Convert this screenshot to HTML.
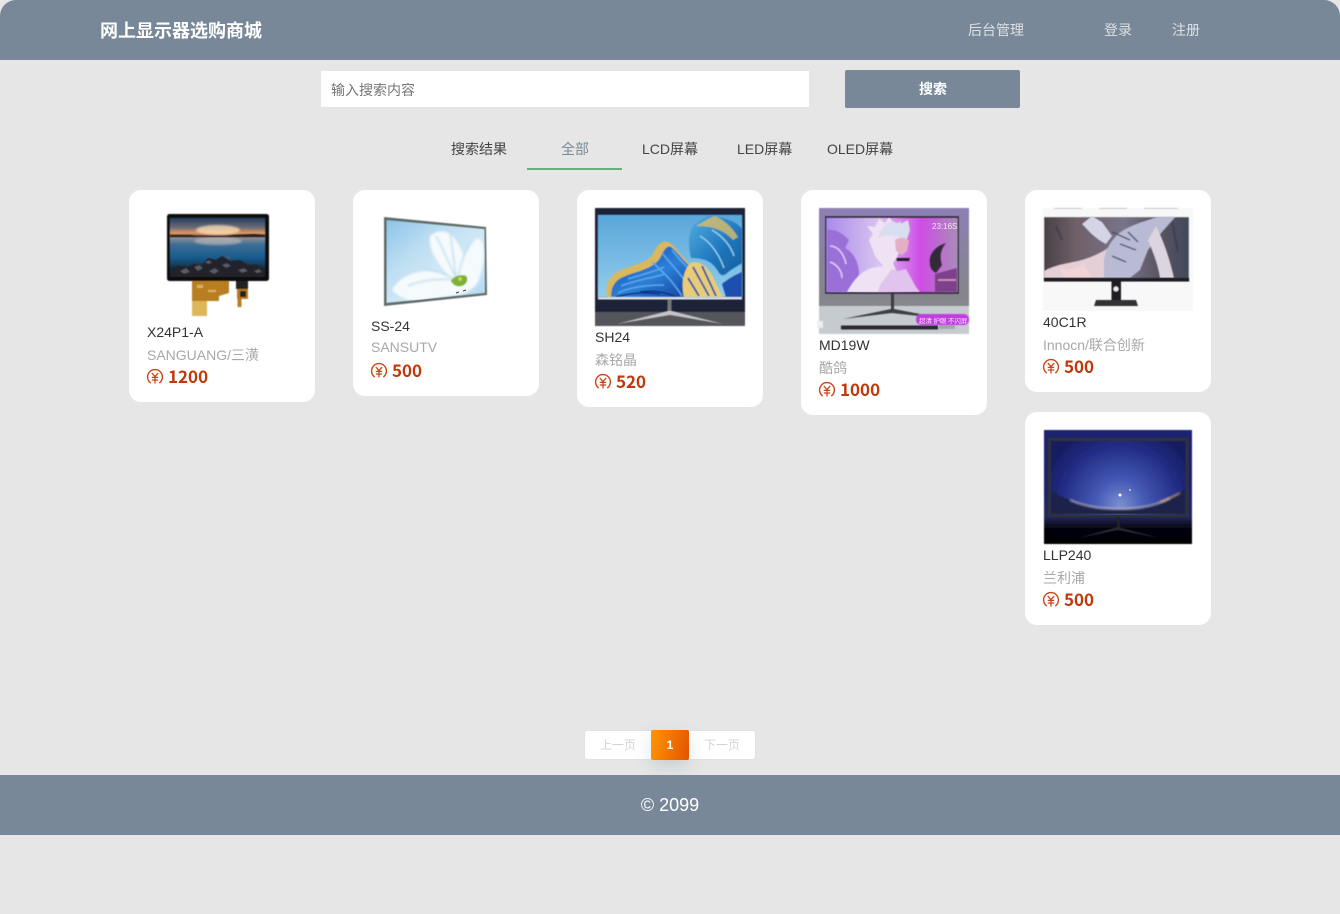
<!DOCTYPE html>
<html lang="zh-CN">
<head>
<meta charset="utf-8">
<title>网上显示器选购商城</title>
<style>
*{margin:0;padding:0;box-sizing:border-box}
html,body{width:1340px;height:914px;overflow:hidden;background:#e6e6e6}
body{position:relative;font-family:"Liberation Sans","Noto Sans CJK SC",sans-serif;font-size:14px;color:#333}
.a{position:absolute;white-space:nowrap}
.t{position:absolute;white-space:nowrap;line-height:20px;height:20px}
.hdr{left:0;top:0;width:1340px;height:60px;background:#788898;border-radius:16px 16px 0 0}
.nav{color:#dde1e5}
.card{position:absolute;background:#fff;border-radius:12px;width:186px}
.n{color:#333}
.b{color:#a8a8a8}
.p{color:#c0390b;font-weight:700;font-size:17px;font-family:"Noto Sans CJK SC",sans-serif}
.tab{color:#444}
</style>
</head>
<body>
<div class="a hdr"></div>
<div class="t" style="left:100px;top:21px;font-size:18px;font-weight:700;color:#fff">网上显示器选购商城</div>
<div class="t nav" style="left:968px;top:20px">后台管理</div>
<div class="t nav" style="left:1104px;top:20px">登录</div>
<div class="t nav" style="left:1172px;top:20px">注册</div>

<div class="a" style="left:321px;top:71px;width:488px;height:36px;background:#fff"></div>
<div class="t" style="left:331px;top:80px;color:#757575">输入搜索内容</div>
<div class="a" style="left:845px;top:70px;width:175px;height:38px;background:#788898;border-radius:2px"></div>
<div class="t" style="left:919px;top:79px;color:#fff;font-weight:700">搜索</div>

<div class="t tab" style="left:451px;top:139px">搜索结果</div>
<div class="t" style="left:561px;top:139px;color:#788898">全部</div>
<div class="t tab" style="left:642px;top:139px">LCD屏幕</div>
<div class="t tab" style="left:737px;top:139px">LED屏幕</div>
<div class="t tab" style="left:827px;top:139px">OLED屏幕</div>
<div class="a" style="left:527px;top:168px;width:95px;height:2px;background:#6bb07c"></div>

<div class="card" style="left:129px;top:190px;height:212px"></div>
<div class="card" style="left:353px;top:190px;height:206px"></div>
<div class="card" style="left:577px;top:190px;height:217px"></div>
<div class="card" style="left:801px;top:190px;height:225px"></div>
<div class="card" style="left:1025px;top:190px;height:202px"></div>
<div class="card" style="left:1025px;top:412px;height:213px"></div>

<svg class="a" style="left:0;top:0" width="1340" height="914" viewBox="0 0 1340 914">
<defs>
<filter id="s" x="-5%" y="-5%" width="110%" height="110%"><feGaussianBlur stdDeviation="0.45"/></filter>
<filter id="s1" x="-20%" y="-20%" width="140%" height="140%"><feGaussianBlur stdDeviation="1"/></filter>
<filter id="s2" x="-30%" y="-30%" width="160%" height="160%"><feGaussianBlur stdDeviation="2.5"/></filter>
<clipPath id="c1"><rect x="170" y="218" width="95" height="59"/></clipPath>
<clipPath id="c2"><path d="M386.500 220 484.500 229 485 293 386.500 303z"/></clipPath>
<clipPath id="c3"><rect x="598" y="215" width="144" height="82"/></clipPath>
<clipPath id="c4"><rect x="826.500" y="218" width="131" height="74"/></clipPath>
<clipPath id="c5"><rect x="1044" y="217" width="145" height="61"/></clipPath>
<clipPath id="c6"><rect x="1051" y="441" width="134.500" height="73"/></clipPath>
<linearGradient id="g1" x1="0" y1="0" x2="0" y2="1">
<stop offset="0" stop-color="#22405e"/><stop offset=".16" stop-color="#6c6a78"/><stop offset=".26" stop-color="#e49a62"/><stop offset=".3" stop-color="#70493a"/><stop offset=".34" stop-color="#8a8d98"/><stop offset=".45" stop-color="#3d6e96"/><stop offset=".68" stop-color="#175a8c"/><stop offset=".85" stop-color="#112c42"/><stop offset="1" stop-color="#15171b"/>
</linearGradient>
<linearGradient id="g2" x1="0" y1="0" x2="1" y2="1">
<stop offset="0" stop-color="#8cc4ea"/><stop offset=".35" stop-color="#bfdff2"/><stop offset=".7" stop-color="#d9edf8"/><stop offset="1" stop-color="#a9d2ec"/>
</linearGradient>
<linearGradient id="g3" x1="0" y1="0" x2="0" y2="1">
<stop offset="0" stop-color="#5aa6da"/><stop offset="1" stop-color="#93cdec"/>
</linearGradient>
<linearGradient id="wb" x1="0" y1="0" x2="1" y2="1">
<stop offset="0" stop-color="#1448b0"/><stop offset=".55" stop-color="#2c80d8"/><stop offset="1" stop-color="#123c98"/>
</linearGradient>
<linearGradient id="wc" x1="0" y1="0" x2="1" y2="1">
<stop offset="0" stop-color="#50b0e0"/><stop offset=".6" stop-color="#1f74bc"/><stop offset="1" stop-color="#15609c"/>
</linearGradient>
<linearGradient id="g4" x1="0" y1="0" x2="1" y2="0">
<stop offset="0" stop-color="#a98cec"/><stop offset=".4" stop-color="#d9c4f0"/><stop offset=".72" stop-color="#d04ce6"/><stop offset="1" stop-color="#a98cb8"/>
</linearGradient>
<linearGradient id="g4b" x1="0" y1="0" x2="0" y2="1">
<stop offset="0" stop-color="#8e80b4"/><stop offset=".7" stop-color="#85858c"/><stop offset="1" stop-color="#8a8a90"/>
</linearGradient>
<radialGradient id="g6" gradientUnits="userSpaceOnUse" cx="1120" cy="505" r="85">
<stop offset="0" stop-color="#7c8ed0"/><stop offset=".3" stop-color="#4458b4"/><stop offset=".7" stop-color="#222c84"/><stop offset="1" stop-color="#141a5c"/>
</radialGradient>
<linearGradient id="g6b" x1="0" y1="0" x2="0" y2="1">
<stop offset="0" stop-color="#1b2270"/><stop offset=".55" stop-color="#1c2468"/><stop offset=".76" stop-color="#24285a"/><stop offset=".86" stop-color="#060612"/><stop offset="1" stop-color="#000"/>
</linearGradient>
<linearGradient id="g5" x1="0" y1="0" x2="1" y2="0">
<stop offset="0" stop-color="#4a4048"/><stop offset=".22" stop-color="#6f6068"/><stop offset=".55" stop-color="#77748a"/><stop offset=".8" stop-color="#5a5360"/><stop offset="1" stop-color="#404a5c"/>
</linearGradient>
<g id="yen">
<path d="M3.700 14A7.400 7.400 0 1 1 12.300 14" fill="none" stroke="#c8451a" stroke-width="1.400"/>
<path d="M4.800 4 8 7.600 11.200 4M8 7.600V14.500M4.800 8.400h6.400M4.800 11h6.400" fill="none" stroke="#c8451a" stroke-width="1.300"/>
</g>
</defs>

<!-- image 1 -->
<g filter="url(#s)">
<path d="M192 281h37v12l-10 3v5h-12v15h-15z" fill="#b87e24"/>
<rect x="192" y="301" width="15" height="15" fill="#dcb658"/>
<path d="M197 285h6v3h-6zM208 290h8v2h-8z" fill="#e0b060"/>
<rect x="236" y="281" width="12" height="8" fill="#222"/>
<rect x="237" y="289" width="11" height="10" fill="#b87a24"/>
<rect x="240" y="291" width="6" height="6" fill="#222"/>
<rect x="237.500" y="299" width="4" height="8" fill="#b87a24"/>
<rect x="167" y="214" width="102" height="67" rx="2.500" fill="#0c0c0e"/>
<rect x="170" y="218" width="95" height="59" fill="url(#g1)"/>
</g>
<g clip-path="url(#c1)">
<ellipse cx="218" cy="230" rx="22" ry="5" fill="#ffe2b8" opacity=".75" filter="url(#s1)"/>
<ellipse cx="218" cy="241" rx="24" ry="4" fill="#c8c0bc" opacity=".6" filter="url(#s1)"/>
<path d="M170 235h20l6 1h30l8-1 20-1 11 1v2h-95z" fill="#2a211e" filter="url(#s)"/>
<path d="M170 277v-7l8-4 10 1 6-3 8 1 6-7 8 2 6-4 8 5 10-1 8 5 10 0 7 5v7z" fill="#23242b" filter="url(#s)"/>
<path d="M180 271l6-3 4 4-6 2zM194 267l5-2 4 3-5 3zM209 271l6-3 4 3-5 3zM222 265l5-2 4 3-5 2zM238 270l6-2 4 3-6 2zM254 271l5-2 3 3-5 1zM205 262l4-2 3 3-4 1zM226 257l3-1 2 2-3 1z" fill="#5a5a62" filter="url(#s)"/>
</g>

<!-- image 2 -->
<path d="M384 217 486 227 487 295 384 306z" fill="#5f6a68" filter="url(#s)"/>
<path d="M386.500 220 484.500 229 485 293 386.500 303z" fill="url(#g2)" filter="url(#s)"/>
<g clip-path="url(#c2)">
<g filter="url(#s1)">
<path d="M392 290c10-18 38-26 62-10-18-16-26-32-24-44 10-8 18-4 22 0 6 6 10 14 12 22 4-8 8-16 14-20l4 4c4 14 0 28-4 40-4 6-10 10-16 12l-30 4c-14 4-28 4-40-8z" fill="#f5fafd"/>
<path d="M436 236c8 14 14 30 20 42M450 232c2 14 4 30 6 46M422 268c12 2 24 6 34 12M408 286c14-6 32-8 46-6M470 242c-6 12-10 24-12 36" stroke="#bfdcee" stroke-width="1.500" fill="none"/>
</g>
<path d="M451 281c3-5 10-7 15-5 3 4 0 9-5 10-4 1-8-1-10-5z" fill="#7eb23a" filter="url(#s)"/>
<circle cx="460" cy="279" r="2" fill="#c8d84a" filter="url(#s)"/>
<path d="M456 293l3-1M463 291l3-1" stroke="#2a4a20" stroke-width="1"/>
</g>

<!-- image 3 -->
<g filter="url(#s)">
<rect x="595" y="208" width="150" height="118" fill="#1c2138"/>
<rect x="595" y="312" width="150" height="14" fill="#55555c"/>
<rect x="598" y="215" width="144" height="82" fill="url(#g3)"/>
</g>
<g clip-path="url(#c3)">
<g filter="url(#s)">
<path d="M607 297c-2-10 1-19 10-25 13-7 28-7 36-18 4-9 9-14 15-12 8 4 11 12 20 20l6 35z" fill="#dcb85c"/>
<path d="M611 297c0-9 3-16 12-20 13-6 29-7 37-19 4-8 7-13 11-11 7 5 12 14 20 20 5 8 4 20 2 30z" fill="url(#wb)"/>
<path d="M618 293c14-7 32-8 46-8M621 286c14-6 32-8 44-12M628 279c12-4 26-7 36-12M652 262c10 9 20 18 30 34M662 253c8 10 18 20 26 32M672 250c6 8 12 14 18 20" stroke="#5aa6ec" stroke-width="1.600" fill="none"/>
<path d="M616 297c14-4 30-5 44-3M640 292c12-2 26 0 36 5" stroke="#0c3488" stroke-width="1.600" fill="none"/>
<path d="M684 297c-3-13-1-25 6-34 9-3 16 2 22 12 4 8 7 15 11 22z" fill="#e8cc78"/>
<path d="M693 267l16 29M688 278l11 18M702 266l14 30" stroke="#1a50ac" stroke-width="1.800" fill="none"/>
<path d="M691 258c-3-12-3-25 3-33 8-6 13-10 21-9 12 3 21 5 27 13v34c-6 4-12 7-15 10-4 4-7 2-9-2-6-10-14-13-27-13z" fill="url(#wc)"/>
<path d="M696 226c7-4 13-8 19-10 10 5 17 11 23 21l-5 3c-8-9-19-14-37-14z" fill="#dcbe66" opacity=".8"/>
<path d="M700 236c10 6 18 16 24 32M712 230c10 6 18 14 22 26" stroke="#8ed0f0" stroke-width="1.400" fill="none"/>
<path d="M722 284c6-5 13-9 20-12v25h-16z" fill="#1a50b0"/>
</g>
</g>
<g filter="url(#s)">
<rect x="598" y="297" width="144" height="2.500" fill="#dfe2ea"/>
<rect x="667.500" y="299" width="4" height="14" fill="#777"/>
<path d="M617 324 668 311 672 311 723 324 670 315z" fill="#c4c4c8"/>
</g>

<!-- image 4 -->
<g filter="url(#s)">
<rect x="819" y="208" width="150" height="126" fill="url(#g4b)"/>
<rect x="819" y="306" width="150" height="28" fill="#c6cbd0"/>
<rect x="825" y="216" width="134" height="78" fill="#2a2838"/>
<rect x="826.500" y="218" width="131" height="74" fill="url(#g4)"/>
</g>
<g clip-path="url(#c4)">
<g filter="url(#s)">
<path d="M827 230c10-1 16 4 22 10l-4 8c8 4 14 14 14 26l-6 18h-26z" fill="#9a70d8"/>
<path d="M830 246c8 0 14 8 16 18M830 262c6 2 12 8 12 16" stroke="#e8c8f4" stroke-width="1.500" fill="none"/>
<path d="M847 292c8-14 14-20 24-24l12-2-8-10-6-16 4-6-6-8 8 1 4-8 6 4 4-6 6 8 6-4-2 10 6 4-4 10c-2 8-4 14-8 18l6 14 14 8 6 7z" fill="#efe2f4"/>
<path d="M878 238c2-8 7-14 14-17l8 3 8-4 2 10-4 12c-8-8-18-8-28-4z" fill="#d8def0"/>
<path d="M895 240c4-3 11-3 14 1l-2 10-5 4-6-4z" fill="#e2b0c4"/>
<path d="M896 258h14l-1 3h-12z" fill="#221a2c"/>
<path d="M880 285l12-16 6 2 8-2 10 18 4 5h-42z" fill="#e0c4ee"/>
<path d="M930 264c-2-10 6-18 16-21-5 6-7 13-4 22l-6 8c-3-2-6-4-6-9z" fill="#332a38"/>
<path d="M935 292v-18l22-6v24z" fill="#7d3f8a"/>
<path d="M938 280h18" stroke="#e0a0c0" stroke-width="1.500"/>
</g>
<text x="932" y="229" font-family="Liberation Sans,sans-serif" font-size="8" fill="#fff" opacity=".8">23:16S</text>
</g>
<g filter="url(#s)">
<rect x="891" y="293" width="3" height="18" fill="#3a3a3e"/>
<path d="M843 319 891 309 894 309 946 319 892 313z" fill="#3d3e42"/>
<rect x="841" y="325.500" width="97" height="4" fill="#2b2c30"/>
<rect x="939" y="325" width="16" height="4" fill="#a4a6aa"/>
<rect x="817" y="321" width="6" height="7" fill="#eceef0"/>
<rect x="916" y="314" width="53" height="11" rx="5" fill="#c13ee0"/>
</g>
<text x="919" y="323" font-family="Noto Sans CJK SC,sans-serif" font-size="6.500" fill="#f6e4fa">超清 护眼 不闪屏</text>

<!-- image 5 -->
<g filter="url(#s)">
<rect x="1043" y="208" width="150" height="103" fill="#f8f8f8"/>
<path d="M1054 208.500h28M1099 208.500h28M1144 208.500h34" stroke="#c4c4c4" stroke-width="1"/>
<rect x="1044" y="217" width="145" height="64" fill="url(#g5)"/>
</g>
<g clip-path="url(#c5)">
<g filter="url(#s)">
<path d="M1044 271c10-6 24-8 34-10 12-3 24-8 34-16l8 33h-76z" fill="#e4cfd6"/>
<path d="M1060 268c8 4 16 0 24-4l8 14h-28z" fill="#f2d4d6"/>
<path d="M1104 262c0-10 6-20 14-28 10-8 24-12 42-18l18-2-16 18-14 18-8 20-10 8h-26z" fill="#b9bad4"/>
<path d="M1082 224c6 6 12 14 24 20l6-8-10-14-10-6z" fill="#d5d4e6"/>
<path d="M1112 232l18 8M1120 244l16 6M1112 256l14 6M1128 232l10 10" stroke="#4a5068" stroke-width="1.400" fill="none"/>
<path d="M1156 226c6 12 12 26 18 52h-14c-2-14-8-28-12-38z" fill="#dcd4de"/>
<path d="M1056 226l6 14M1172 222l6 30" stroke="#2e3442" stroke-width="2" opacity=".5" fill="none"/>
</g>
</g>
<g filter="url(#s)">
<rect x="1044" y="278" width="145" height="3.500" fill="#1f1c20"/>
<rect x="1111.500" y="281" width="9.500" height="20" fill="#1f1f22"/>
<circle cx="1116" cy="289" r="2.500" fill="#eee"/>
<path d="M1096 300h40l2 6h-44z" fill="#333336"/>
</g>

<!-- image 6 -->
<g filter="url(#s)">
<rect x="1044" y="430" width="148" height="114" fill="url(#g6b)"/>
<rect x="1048" y="438" width="140.500" height="79" fill="#2f3038"/>
<rect x="1051" y="441" width="134.500" height="73" fill="url(#g6)"/>
</g>
<g clip-path="url(#c6)">
<path d="M1051 491c20 12 45 18 68 18s48-6 66-20v25h-134.500z" fill="#1e2248" filter="url(#s)"/>
<path d="M1070 500c16 7 32 9 50 9s36-3 50-11" fill="none" stroke="#cfc8dc" stroke-width="1.500" filter="url(#s1)"/>
<path d="M1160 502c8-2 14-6 20-9" fill="none" stroke="#d8a070" stroke-width="1.500" filter="url(#s1)"/>
</g>
<circle cx="1120" cy="495" r="1.500" fill="#fff"/>
<circle cx="1130" cy="490" r="1" fill="#c8ccf0"/>
<g filter="url(#s)">
<rect x="1117" y="517" width="3" height="12" fill="#222"/>
<path d="M1078 538 1118 527 1159 538 1118 530z" fill="#2a2a2e"/>
</g>

<!-- icons -->
<use href="#yen" x="147" y="369"/>
<use href="#yen" x="371" y="363"/>
<use href="#yen" x="595" y="374"/>
<use href="#yen" x="819" y="382"/>
<use href="#yen" x="1043" y="359"/>
<use href="#yen" x="1043" y="592"/>
</svg>

<div class="t n" style="left:147px;top:322px">X24P1-A</div>
<div class="t b" style="left:147px;top:345px">SANGUANG/三潢</div>
<div class="t p" style="left:168px;top:366px">1200</div>

<div class="t n" style="left:371px;top:316px">SS-24</div>
<div class="t b" style="left:371px;top:337px">SANSUTV</div>
<div class="t p" style="left:392px;top:360px">500</div>

<div class="t n" style="left:595px;top:327px">SH24</div>
<div class="t b" style="left:595px;top:350px">森铭晶</div>
<div class="t p" style="left:616px;top:371px">520</div>

<div class="t n" style="left:819px;top:335px">MD19W</div>
<div class="t b" style="left:819px;top:358px">酷鸽</div>
<div class="t p" style="left:840px;top:379px">1000</div>

<div class="t n" style="left:1043px;top:312px">40C1R</div>
<div class="t b" style="left:1043px;top:335px">Innocn/联合创新</div>
<div class="t p" style="left:1064px;top:356px">500</div>

<div class="t n" style="left:1043px;top:545px">LLP240</div>
<div class="t b" style="left:1043px;top:568px">兰利浦</div>
<div class="t p" style="left:1064px;top:589px">500</div>

<div class="a" style="left:585px;top:731px;width:170px;height:28px;background:#fff;border-radius:2px;box-shadow:0 0 1px #ccc"></div>
<div class="a" style="left:651px;top:730px;width:38px;height:30px;background:linear-gradient(100deg,#ff9500,#e35400);border-radius:2px;box-shadow:0 6px 16px rgba(120,136,152,.25)"></div>
<div class="t" style="left:600px;top:735px;font-size:12px;color:#d4d4d4">上一页</div>
<div class="t" style="left:651px;top:735px;width:38px;text-align:center;font-size:12px;font-weight:700;color:#fff">1</div>
<div class="t" style="left:704px;top:735px;font-size:12px;color:#d4d4d4">下一页</div>

<div class="a" style="left:0;top:775px;width:1340px;height:60px;background:#788898"></div>
<div class="t" style="left:0;top:795px;width:1340px;text-align:center;font-size:18px;color:#fff">© 2099</div>
</body>
</html>
